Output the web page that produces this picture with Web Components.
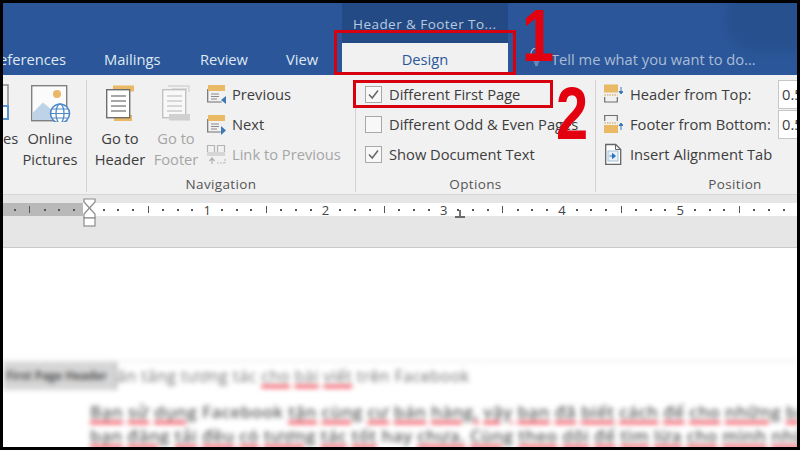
<!DOCTYPE html>
<html>
<head>
<meta charset="utf-8">
<title>Header & Footer Tools</title>
<style>
html, body { margin: 0; padding: 0; background: #000; }
svg { display: block; }
u { text-decoration-color: #f0414f; text-decoration-thickness: 3px; text-underline-offset: 3px; }
</style>
</head>
<body>

<word-shot>
  <word-tabs>
    <word-tab style="width:63px;justify-content:flex-end">eferences</word-tab>
    <word-tab style="width:60px;margin-left:38px">Mailings</word-tab>
    <word-tab style="width:48px;margin-left:36px">Review</word-tab>
    <word-tab style="width:33px;margin-left:38px">View</word-tab>
    <word-tab active style="margin-left:23px">Design</word-tab>
    <word-tell>Tell me what you want to do...</word-tell>
  </word-tabs>

  <word-ribbon>
    <word-group style="width:84px">
      <div slot="content" style="display:flex;width:100%">
        <word-big edge style="width:14px">
          <svg slot="icon" width="14" height="38" viewBox="0 0 14 38"><path d="M0 1h5v27" fill="none" stroke="#8a8a8a" stroke-width="1.500"/><rect x="-6" y="22" width="11" height="13" fill="#fff" stroke="#5b93cf" stroke-width="2"/></svg>
          es
        </word-big>
        <word-big style="width:66px">
          <svg slot="icon" width="42" height="38" viewBox="0 0 42 38"><rect x="2.700" y="1.700" width="35" height="35" fill="#fbfbfb" stroke="#808080" stroke-width="1.400"/><path d="M3.500 36V29L14 18.500 23 26l5 10z" fill="#bed2e8"/><circle cx="28" cy="10" r="4" fill="#e9b765"/><circle cx="31" cy="29.500" r="9.500" fill="#fff" stroke="#4f8ac8" stroke-width="1.600"/><ellipse cx="31" cy="29.500" rx="4" ry="9.500" fill="none" stroke="#4f8ac8" stroke-width="1.300"/><path d="M21.500 29.500h19M23 25h16M23 34h16" fill="none" stroke="#4f8ac8" stroke-width="1.200"/></svg>
          Online<br>Pictures
        </word-big>
      </div>
      <span slot="label"></span>
    </word-group>

    <word-group style="width:269px">
      <div slot="content" style="display:flex;width:100%">
        <word-big style="width:54px;margin-left:6px">
          <svg slot="icon" width="32" height="38" viewBox="0 0 32 38"><rect x="9" y="1.500" width="21" height="6" fill="#e9b965"/><rect x="10" y="31" width="18" height="6" fill="#e9b965"/><rect x="2.700" y="5.700" width="23" height="28" fill="#fff" stroke="#6e6e6e" stroke-width="1.400"/><path d="M7 12h15M7 17h15M7 22h15M7 27h15" stroke="#8a8a8a" stroke-width="1.300"/></svg>
          Go to<br>Header
        </word-big>
        <word-big disabled style="width:54px;margin-left:2px">
          <svg slot="icon" width="32" height="38" viewBox="0 0 32 38"><path d="M8 2h21v6M12 5h15" fill="none" stroke="#d4d4d4" stroke-width="1.400"/><rect x="2.700" y="5.700" width="23" height="28" fill="#f8f8f8" stroke="#c2c2c2" stroke-width="1.400"/><path d="M7 12h15M7 17h15M7 22h15M7 27h15" stroke="#cccccc" stroke-width="1.300"/><rect x="9" y="30" width="21" height="6.500" fill="#d0d0d0"/></svg>
          Go to<br>Footer
        </word-big>
        <div style="display:flex;flex-direction:column;margin:-1px 0 0 3px">
          <word-small gap="5">
            <svg slot="icon" width="21" height="22" viewBox="0 0 21 22"><path d="M1.700 6v13h14" fill="none" stroke="#737373" stroke-width="1.200"/><rect x="2" y="2" width="17" height="6" fill="#e9b965"/><path d="M5 11h8M5 13.500h8M5 16h6" stroke="#8a8a8a" stroke-width="1"/><path d="M20 13v8l-5-4z" fill="#3f78b5"/></svg>
            Previous
          </word-small>
          <word-small gap="5">
            <svg slot="icon" width="21" height="22" viewBox="0 0 21 22"><path d="M1.700 6v13h13" fill="none" stroke="#737373" stroke-width="1.200"/><rect x="2" y="2" width="17" height="6" fill="#e9b965"/><path d="M5 11h8M5 13.500h8M5 16h6" stroke="#8a8a8a" stroke-width="1"/><path d="M15 13v9l5-4.500z" fill="#3f78b5"/></svg>
            Next
          </word-small>
          <word-small disabled gap="5">
            <svg slot="icon" width="21" height="22" viewBox="0 0 21 22"><path d="M1.500 9V2.500h7V9M11.500 9V2.500h7V9" fill="none" stroke="#b5b5b5" stroke-width="1.200"/><rect x="1" y="9" width="18" height="4" fill="#d6d6d6"/><path d="M6 21v-5M3.500 18l2.500-3 2.500 3" fill="none" stroke="#b0b0b0" stroke-width="1.200"/><path d="M11 20h8M19 16v4" fill="none" stroke="#bbb" stroke-width="1.200" stroke-dasharray="2 1"/></svg>
            Link to Previous
          </word-small>
        </div>
      </div>
      <span slot="label">Navigation</span>
    </word-group>

    <word-group style="width:240px">
      <div slot="content" style="display:flex;flex-direction:column;padding-left:9px;margin-top:-1px">
        <word-check checked>Different First Page</word-check>
        <word-check>Different Odd &amp; Even Pages</word-check>
        <word-check checked>Show Document Text</word-check>
      </div>
      <span slot="label">Options</span>
    </word-group>

    <word-group style="width:278px;border-right:0">
      <div slot="content" style="display:flex;flex-direction:column;padding-left:8px;margin-top:-1px">
        <word-small field="0.5" gap="7">
          <svg slot="icon" width="19" height="22" viewBox="0 0 19 22"><rect x="0" y="1.500" width="14" height="8" fill="#e9b965"/><path d="M0.500 12h13" stroke="#c99a4a" stroke-dasharray="1.500 1"/><path d="M.7 14v5h12.600v-5" fill="none" stroke="#6e6e6e" stroke-width="1.200"/><path d="M17 4v6M15 8.500l2 2.500 2-2.500z" fill="#3f78b5" stroke="#3f78b5"/></svg>
          Header from Top:
        </word-small>
        <word-small field="0.5" gap="7">
          <svg slot="icon" width="19" height="22" viewBox="0 0 19 22"><path d="M.7 8V2.500h12.600V8" fill="none" stroke="#6e6e6e" stroke-width="1.200"/><path d="M0.500 10h13" stroke="#c99a4a" stroke-dasharray="1.500 1"/><rect x="0" y="12" width="14" height="8" fill="#e9b965"/><path d="M17 17v-6M15 12.500l2-2.500 2 2.500z" fill="#3f78b5" stroke="#3f78b5"/></svg>
          Footer from Bottom:
        </word-small>
        <word-small gap="7">
          <svg slot="icon" width="19" height="22" viewBox="0 0 19 22"><path d="M1.700 1.500h10l5 5v15h-15z" fill="#fff" stroke="#666" stroke-width="1.300"/><path d="M11.500 1.500v5h5" fill="none" stroke="#666" stroke-width="1"/><rect x="4" y="8" width="10" height="10" fill="#e8f0f8" stroke="#a5bfd9"/><path d="M5.500 13h5M8.500 10.500l3 2.500-3 2.500z" fill="#2f73b8" stroke="#2f73b8"/></svg>
          Insert Alignment Tab
        </word-small>
      </div>
      <span slot="label">Position</span>
    </word-group>
  </word-ribbon>

  <word-ruler></word-ruler>

  <word-page>
    <span slot="tag">First Page Header</span>
    <span slot="title">ăn tăng tương tác <u>cho</u> <u>bài</u> <u>viết</u> trên Facebook</span>
    <p><u>Bạn</u> <u>sử</u> <u>dụng</u> Facebook <u>tận</u> <u>cùng</u> <u>cư</u> <u>bán</u> <u>hàng,</u> <u>vậy</u> <u>bạn</u> <u>đã</u> <u>biết</u> <u>cách</u> <u>để</u> <u>cho</u> <u>những</u> <u>bài</u></p>
    <p><u>bạn</u> <u>đăng</u> <u>tải</u> <u>đều</u> <u>có</u> <u>tương</u> <u>tác</u> <u>tốt</u> hay <u>chưa.</u> <u>Cùng</u> <u>theo</u> <u>dõi</u> <u>để</u> <u>tìm</u> <u>lừa</u> <u>cho</u> <u>mình</u> <u>những</u></p>
  </word-page>

  <word-mark style="left:331px;top:27px;width:176px;height:39px"></word-mark>
  <word-mark style="left:350px;top:77px;width:194px;height:22px"></word-mark>
  <word-num style="left:519px;top:-7px">1</word-num>
  <word-num style="left:553px;top:71px">2</word-num>
</word-shot>

<script>
class WordShot extends HTMLElement {
    constructor() {
        super();
        this.attachShadow({mode:'open'}).innerHTML = `<style>
        :host { display:block; position:relative; width:800px; height:450px; box-sizing:border-box; background:#000; overflow:hidden; }
        .in { position:relative; width:794px; height:444px; margin:3px; display:flex; flex-direction:column; overflow:hidden; background:#fff;
              font-family:"Open Sans","Noto Sans",sans-serif; filter:blur(.4px); }
        </style><div class="in"><slot></slot></div>`;
    }
}

class WordTabs extends HTMLElement {
    constructor() {
        super();
        this.attachShadow({mode:'open'}).innerHTML = `<style>
        :host { display:flex; flex:none; align-items:flex-end; height:72px; background:#2b579a; position:relative; overflow:hidden; }
        .cloud { position:absolute; left:722px; top:-16px; width:90px; height:64px; border-radius:32px 0 0 32px; background:#27508e; filter:blur(5px); }
        </style><div class="cloud"></div><slot></slot>`;
    }
}

class WordTab extends HTMLElement {
    constructor() {
        super();
        const active = this.hasAttribute('active');
        this.attachShadow({mode:'open'}).innerHTML = `<style>
        :host { display:flex; flex:none; align-items:center; height:32px; font-size:14.700px; color:#dfe7f2; position:relative; white-space:nowrap; }
        :host([active]) { width:166px; justify-content:center; background:#f1f1f1; color:#2b579a; }
        .ctx { position:absolute; left:0; top:-40px; width:166px; height:40px; background:#234a85; color:#b9c9df; font-size:13.500px; letter-spacing:.45px; box-sizing:border-box; padding:12px 0 0 11px; }
        </style>${active ? '<div class="ctx">Header &amp; Footer To...</div>' : ''}<slot></slot>`;
    }
}

class WordTell extends HTMLElement {
    constructor() {
        super();
        this.attachShadow({mode:'open'}).innerHTML = `<style>
        :host { display:flex; flex:none; align-items:center; gap:8px; height:32px; margin-left:22px; color:#a9bcd6; font-size:14.700px; white-space:nowrap; position:relative; }
        svg { display:block; margin-top:-4px; }
        </style><svg width="13" height="19" viewBox="0 0 13 19"><path d="M4 13c0-3-3-4-3-7.500a5.500 5.500 0 0 1 11 0C12 9 9 10 9 13z" fill="none" stroke="#a9bcd6" stroke-width="1.200"/><path d="M4.500 15h4M5 17h3" stroke="#a9bcd6" stroke-width="1.200"/></svg><span><slot></slot></span>`;
    }
}

class WordRibbon extends HTMLElement {
    constructor() {
        super();
        this.attachShadow({mode:'open'}).innerHTML = `<style>
        :host { display:flex; flex:none; height:120px; background:#f1f1f1; box-sizing:border-box; border-bottom:1px solid #d6d6d6; color:#444; overflow:hidden; }
        </style><slot></slot>`;
    }
}

class WordGroup extends HTMLElement {
    constructor() {
        super();
        this.attachShadow({mode:'open'}).innerHTML = `<style>
        :host { display:flex; flex:none; flex-direction:column; box-sizing:border-box; height:112px; margin-top:5px; border-right:1px solid #d2d2d2; position:relative; }
        .body { flex:1; display:flex; }
        .label { height:22px; margin-bottom:-3px; text-align:center; font-size:13.500px; line-height:22px; color:#555; letter-spacing:.35px; }
        </style><div class="body"><slot name="content"></slot></div><div class="label"><slot name="label"></slot></div>`;
    }
}

class WordBig extends HTMLElement {
    constructor() {
        super();
        this.attachShadow({mode:'open'}).innerHTML = `<style>
        :host { display:flex; flex:none; flex-direction:column; align-items:center; color:#3d3d3d; font-size:14.700px; line-height:21px; text-align:center; white-space:nowrap; }
        :host([disabled]) { color:#a6a6a6; }
        :host([edge]) { align-items:flex-start; }
        .ic { height:38px; margin:4px 0 6px; }
        </style><div class="ic"><slot name="icon"></slot></div><div><slot></slot></div>`;
    }
}

class WordSmall extends HTMLElement {
    constructor() {
        super();
        const field = this.getAttribute('field');
        const gap = this.getAttribute('gap') || 6;
        this.attachShadow({mode:'open'}).innerHTML = `<style>
        :host { display:flex; flex:none; align-items:center; gap:${gap}px; height:30px; color:#3d3d3d; font-size:14.700px; white-space:nowrap; position:relative; }
        :host([disabled]) { color:#a6a6a6; }
        .f { position:absolute; left:174px; top:1px; width:60px; height:29px; box-sizing:border-box; border:1px solid #c6c6c6; background:#fff; padding-left:3px; line-height:27px; }
        </style><slot name="icon"></slot><span><slot></slot></span>${field ? `<div class="f">${field}</div>` : ''}`;
    }
}

class WordCheck extends HTMLElement {
    constructor() {
        super();
        const on = this.hasAttribute('checked');
        this.attachShadow({mode:'open'}).innerHTML = `<style>
        :host { display:flex; flex:none; align-items:center; gap:7px; height:30px; color:#3d3d3d; font-size:14.700px; white-space:nowrap; }
        svg { display:block; flex:none; }
        </style><svg width="17" height="17" viewBox="0 0 17 17"><rect x=".5" y=".5" width="16" height="16" fill="#f8f8f8" stroke="#a8a8a8"/>${on ? '<path d="M4 8.500l3.200 3.500L13 4.500" fill="none" stroke="#666" stroke-width="1.500"/>' : ''}</svg><span><slot></slot></span>`;
    }
}

class WordRuler extends HTMLElement {
    constructor() {
        super();
        const step = 14.79;
        let cells = '';
        // eighth of an inch per cell, cell 0 is the page margin
        for (let i = -5; i < 48; i++) {
            let c = '<i></i>';
            if (i === 0) c = '';
            else if (i % 8 === 0) c = `<b>${i / 8}</b>`;
            else if (i % 4 === 0) c = '<i class="t"></i>';
            cells += `<span>${c}</span>`;
        }
        this.attachShadow({mode:'open'}).innerHTML = `<style>
        :host { display:block; flex:none; height:53px; box-sizing:border-box; background:#e6e6e6; border-bottom:1px solid #c9c9c9; padding-top:8px; position:relative; overflow:hidden; }
        .band { display:flex; height:13px; padding-left:4.600px; background:linear-gradient(90deg,#b9b9b9 80px,#fff 80px); }
        span { flex:none; width:${step}px; height:13px; display:flex; align-items:center; justify-content:center; }
        i { display:block; width:2px; height:2px; background:#555; }
        i.t { height:7px; width:1px; }
        b { font:400 13px "Open Sans",sans-serif; color:#444; }
        svg { position:absolute; left:80px; top:3px; }
        .tab { position:absolute; left:452px; top:15px; width:10px; height:8px; }
        </style><div class="band">${cells}</div>
        <svg width="13" height="29" viewBox="0 0 13 29"><path d="M1 1h11v3l-5.500 6L1 4zM1 16l5.500-6 5.500 6v4H1z" fill="#fff" stroke="#8c8c8c" stroke-width="1.200"/><rect x="1" y="20" width="11" height="8" fill="#fff" stroke="#8c8c8c" stroke-width="1.200"/></svg>
        <svg class="tab" viewBox="0 0 10 8"><path d="M5 0v6M0 7h10" stroke="#444" stroke-width="1.500"/></svg>`;
    }
}

class WordPage extends HTMLElement {
    constructor() {
        super();
        this.attachShadow({mode:'open'}).innerHTML = `<style>
        :host { display:block; flex:1; background:#fff; color:#555; font-size:17px; overflow:hidden; }
        .blur { filter:blur(2.800px); padding-top:113px; }
        .head { display:flex; align-items:center; height:28px; border-top:1px dotted #c4c4c4; white-space:nowrap; }
        .tag { width:114px; height:28px; box-sizing:border-box; background:#d6d6d6; border-right:2px solid #b5b5b5; text-align:right; padding-right:8px; line-height:28px; font-size:11.500px; font-weight:700; color:#555; flex:none; overflow:hidden; }
        .title { font-size:16px; letter-spacing:.5px; color:#707070; }
        .text { margin:10px 0 0 87px; white-space:nowrap; line-height:24px; letter-spacing:.4px; font-weight:600; color:#5e5e5e; }
        ::slotted(p) { margin:0; }
        </style><div class="blur"><div class="head"><div class="tag"><slot name="tag"></slot></div><div class="title"><slot name="title"></slot></div></div><div class="text"><slot></slot></div></div>`;
    }
}

class WordMark extends HTMLElement {
    constructor() {
        super();
        this.attachShadow({mode:'open'}).innerHTML = `<style>
        :host { display:block; position:absolute; border:3px solid #d7000f; }
        </style>`;
    }
}

class WordNum extends HTMLElement {
    constructor() {
        super();
        this.attachShadow({mode:'open'}).innerHTML = `<style>
        :host { display:block; position:absolute; font:700 74px/80px "Liberation Sans",sans-serif; color:#e3000f; transform:scaleX(.78); transform-origin:0 0; }
        </style><slot></slot>`;
    }
}

customElements.define("word-shot", WordShot);
customElements.define("word-tabs", WordTabs);
customElements.define("word-tab", WordTab);
customElements.define("word-tell", WordTell);
customElements.define("word-ribbon", WordRibbon);
customElements.define("word-group", WordGroup);
customElements.define("word-big", WordBig);
customElements.define("word-small", WordSmall);
customElements.define("word-check", WordCheck);
customElements.define("word-ruler", WordRuler);
customElements.define("word-page", WordPage);
customElements.define("word-mark", WordMark);
customElements.define("word-num", WordNum);
</script>
</body>
</html>
